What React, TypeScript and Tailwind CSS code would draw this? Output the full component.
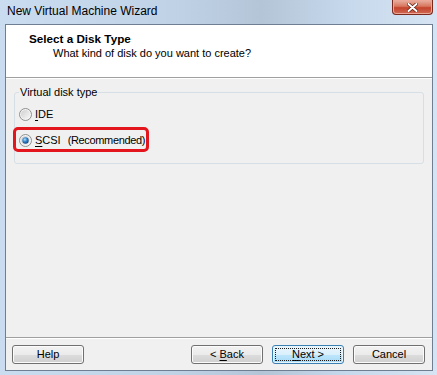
import * as React from "react"

function Radio({ checked, id }: { checked?: boolean; id: string }) {
  return (
    <svg width="13" height="13" viewBox="0 0 13 13" className="shrink-0">
      <defs>
        <linearGradient id={`ring-${id}`} x1="0" y1="0" x2="1" y2="1">
          <stop offset="0" stopColor="#cfcfcf" />
          <stop offset="1" stopColor="#f8f8f8" />
        </linearGradient>
        <radialGradient id={`dot-${id}`} cx="0.4" cy="0.35" r="0.7">
          <stop offset="0" stopColor="#b6e0f7" />
          <stop offset="0.45" stopColor="#3a8ad0" />
          <stop offset="1" stopColor="#0c3f7a" />
        </radialGradient>
      </defs>
      <circle cx="6.5" cy="6.5" r="6" fill="#f4f4f4" stroke="#8e8f8f" />
      <circle cx="6.5" cy="6.5" r="4.6" fill={`url(#ring-${id})`} />
      {checked && <circle cx="6.5" cy="6.5" r="3.2" fill={`url(#dot-${id})`} />}
    </svg>
  )
}

function WinButton({
  children,
  isDefault,
}: {
  children: React.ReactNode
  isDefault?: boolean
}) {
  if (isDefault) {
    return (
      <button className="relative h-[19px] w-[72px] rounded-[3px] border border-[#3c7fb1] bg-[linear-gradient(to_bottom,#eaf6fd_0%,#d9f0fc_50%,#bee6fd_51%,#a7d9f5_100%)] text-[11px] leading-none text-black shadow-[inset_0_0_0_1px_#e6f5fc]">
        <span className="absolute inset-[2px] rounded-[1px] border border-dotted border-[#1a1a1a]" />
        {children}
      </button>
    )
  }
  return (
    <button className="h-[19px] w-[72px] rounded-[3px] border border-[#707070] bg-[linear-gradient(to_bottom,#f2f2f2_0%,#ebebeb_50%,#dddddd_51%,#cfcfcf_100%)] text-[11px] leading-none text-black shadow-[inset_0_0_0_1px_#fbfbfb]">
      {children}
    </button>
  )
}

export default function App() {
  return (
    <div className="flex h-[375px] w-[437px] flex-col overflow-hidden bg-[linear-gradient(to_right,#cadcf0_0%,#c0d2e6_40%,#b4c5d8_60%,#c7d9ec_80%,#d6e4f3_100%)] font-['Liberation_Sans',Arial,sans-serif] text-black">
      <div className="flex h-[24px] shrink-0 items-start justify-between">
        <span className="ml-[7px] mt-[4px] text-[12px] leading-[15px] text-black">
          New Virtual Machine Wizard
        </span>
        <div className="mr-[4px] flex h-[15px] w-[41px] items-center justify-center rounded-b-[4px] border border-t-0 border-[#7a2a1d] bg-[linear-gradient(to_bottom,#e9b2a4_0%,#d8765f_45%,#c4432c_55%,#d06a55_100%)] shadow-[inset_0_0_0_1px_#eba798]">
          <svg width="11" height="9" viewBox="0 0 11 9">
            <path
              d="M1.5 1 L9.5 8 M9.5 1 L1.5 8"
              stroke="#5a1c12"
              strokeWidth="3.4"
              strokeLinecap="round"
            />
            <path
              d="M1.5 1 L9.5 8 M9.5 1 L1.5 8"
              stroke="#ffffff"
              strokeWidth="2"
              strokeLinecap="round"
            />
          </svg>
        </div>
      </div>

      <div className="ml-[5px] mr-[4px] flex h-[347px] flex-col border border-[#6f7f91] bg-[#f0f0f0]">
        <div className="h-[53px] shrink-0 border-b border-[#a0a0a0] bg-white pl-[23px] pt-[6px]">
          <div className="text-[11.7px] font-bold leading-[15px]">Select a Disk Type</div>
          <div className="pl-[24px] text-[11px] leading-[15px]">
            What kind of disk do you want to create?
          </div>
        </div>

        <div className="flex-1 border-t border-white">
          <fieldset className="ml-[8px] mr-[8px] mt-[6px] h-[79px] rounded-[3px] border border-[#d5dfe5] pl-[4px]">
            <legend className="px-[1px] text-[11px] leading-[15px]">Virtual disk type</legend>
            <div className="mt-[7px] flex h-[15px] items-center">
              <Radio id="ide" />
              <span className="ml-[3px] text-[11px] leading-[15px]">
                <span className="underline underline-offset-2">I</span>DE
              </span>
            </div>
            <div className="relative mt-[11px] flex h-[15px] w-fit items-center">
              <Radio id="scsi" checked />
              <span className="ml-[3px] text-[11px] leading-[15px]">
                <span className="underline underline-offset-2">S</span>CSI
              </span>
              <span className="ml-[7px] text-[11px] leading-[15px] tracking-[-0.35px]">
                (Recommended)
              </span>
              <span className="absolute left-[-6px] top-[-6px] h-[25px] w-[136px] rounded-[5px] border-[3px] border-[#e2161c]" />
            </div>
          </fieldset>
        </div>

        <div className="shrink-0 border-t border-[#a0a0a0]">
          <div className="flex h-[32px] items-start border-t border-white pl-[6px] pr-[7px] pt-[6px]">
            <WinButton>Help</WinButton>
            <div className="flex-1" />
            <WinButton>
              &lt; <span className="underline underline-offset-2">B</span>ack
            </WinButton>
            <div className="w-[9px]" />
            <WinButton isDefault>
              <span className="underline underline-offset-2">N</span>ext &gt;
            </WinButton>
            <div className="w-[9px]" />
            <WinButton>Cancel</WinButton>
          </div>
        </div>
      </div>
    </div>
  )
}
